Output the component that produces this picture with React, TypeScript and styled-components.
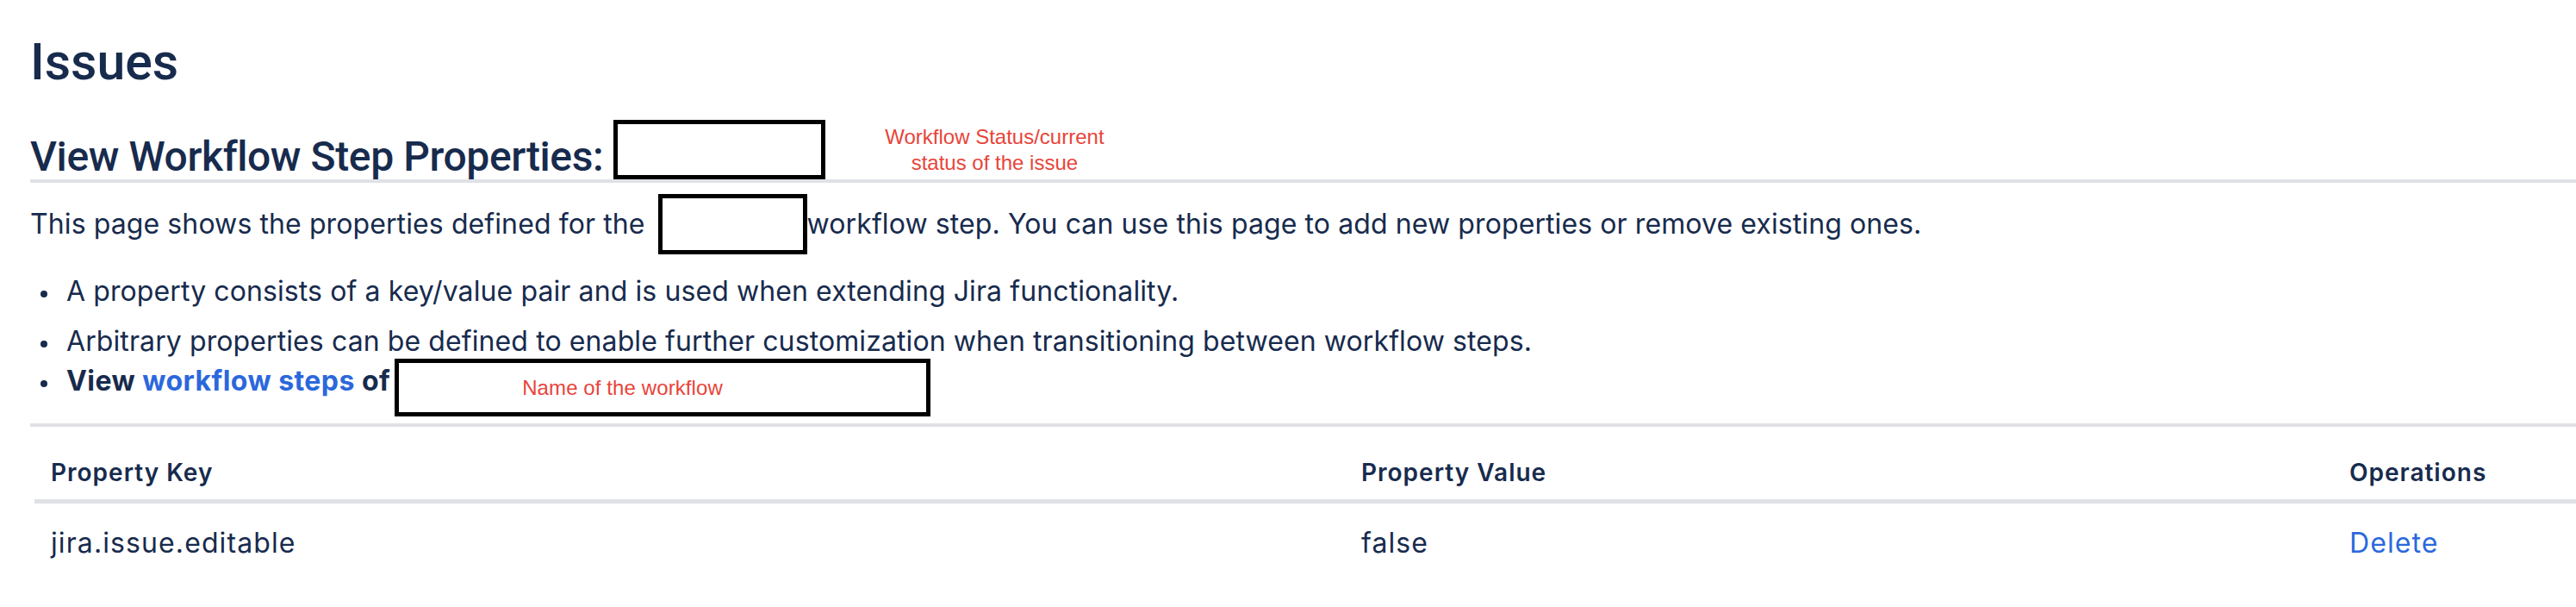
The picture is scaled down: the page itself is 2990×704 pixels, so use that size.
import React from 'react'
import styled, { createGlobalStyle } from 'styled-components'

const GlobalStyle = createGlobalStyle`
  html, body {
    margin: 0;
    padding: 0;
    background: #fff;
    overflow: hidden;
  }
  body {
    font-family: Inter, 'Noto Sans', 'Liberation Sans', sans-serif;
    color: #172b4d;
  }
`

const Page = styled.div`
  padding-left: 35px;
`

const Title = styled.h1`
  margin: 36px 0 0;
  font-family: Roboto, Inter, sans-serif;
  font-size: 59px;
  font-weight: 500;
  line-height: 72px;
`

const HeadingRow = styled.div`
  display: flex;
  align-items: flex-end;
  margin-top: 31px;
  border-bottom: 4px solid #dfe1e6;
`

const Heading = styled.h2`
  margin: 0;
  font-family: Roboto, Inter, sans-serif;
  font-size: 48px;
  font-weight: 500;
  letter-spacing: -0.4px;
  line-height: 52px;
`

const Redaction = styled.div<{ w: number; h: number; gap: number }>`
  box-sizing: border-box;
  flex: none;
  width: ${p => p.w}px;
  height: ${p => p.h}px;
  margin-left: ${p => p.gap}px;
  border: 5px solid #000;
  background: #fff;
  display: flex;
  align-items: center;
`

const Note = styled.div`
  font-family: 'Liberation Sans', Arial, sans-serif;
  font-size: 24px;
  color: #e8443a;
  white-space: nowrap;
`

const HeadingNote = styled(Note)`
  margin: 0 0 4px 69px;
  line-height: 30px;
  text-align: center;
`

const BoxNote = styled(Note)`
  padding-left: 143px;
  line-height: 26px;
`

const Intro = styled.div`
  display: flex;
  align-items: center;
  margin-top: 13px;
  font-size: 32px;
  letter-spacing: 0.1px;
  line-height: 38px;
  white-space: nowrap;
`

const List = styled.ul`
  list-style: none;
  margin: 24px 0 0;
  padding: 0;
  font-size: 32px;
  letter-spacing: 0.1px;
  line-height: 38px;
`

const Item = styled.li<{ spacing: number }>`
  display: flex;
  align-items: flex-start;
  margin-top: ${p => p.spacing}px;
  white-space: nowrap;
`

const Dot = styled.span<{ top: number }>`
  flex: none;
  width: 8px;
  height: 8px;
  margin: ${p => p.top}px 22px 0 12px;
  border-radius: 50%;
  background: #172b4d;
`

const Strong = styled.span<{ top?: number }>`
  font-weight: 700;
  letter-spacing: 0.45px;
  margin-top: ${p => p.top || 0}px;
`

const Link = styled.a`
  color: #2b68dc;
  text-decoration: none;
  cursor: pointer;
`

const TableWrap = styled.div`
  margin-top: 8px;
  border-top: 4px solid #dfe1e6;
`

const Table = styled.table`
  margin-left: 5px;
  width: calc(100% - 5px);
  border-collapse: collapse;
  table-layout: fixed;
`

const Th = styled.th`
  padding: 36px 19px 14px;
  text-align: left;
  font-size: 28px;
  font-weight: 600;
  letter-spacing: 1px;
  line-height: 34px;
  border-bottom: 5px solid #dfe1e6;
  white-space: nowrap;
`

const Td = styled.td`
  padding: 27px 19px;
  font-size: 32px;
  letter-spacing: 1.1px;
  line-height: 38px;
  white-space: nowrap;
`

const properties = [{ key: 'jira.issue.editable', value: 'false' }]

export default function App() {
  return (
    <>
      <GlobalStyle />
      <Page>
        <Title>Issues</Title>
        <HeadingRow>
          <Heading>View Workflow Step Properties:</Heading>
          <Redaction w={246} h={69} gap={12} />
          <HeadingNote>
            Workflow Status/current
            <br />
            status of the issue
          </HeadingNote>
        </HeadingRow>
        <Intro>
          <span>This page shows the properties defined for the</span>
          <Redaction w={173} h={70} gap={15} />
          <span>
            workflow step. You can use this page to add new properties or
            remove existing ones.
          </span>
        </Intro>
        <List>
          <Item spacing={0}>
            <Dot top={18} />
            <span>
              A property consists of a key/value pair and is used when
              extending Jira functionality.
            </span>
          </Item>
          <Item spacing={20}>
            <Dot top={18} />
            <span>
              Arbitrary properties can be defined to enable further
              customization when transitioning between workflow steps.
            </span>
          </Item>
          <Item spacing={1}>
            <Dot top={25} />
            <Strong top={7}>
              View <Link>workflow steps</Link> of
            </Strong>
            <Redaction w={622} h={67} gap={5}>
              <BoxNote>Name of the workflow</BoxNote>
            </Redaction>
          </Item>
        </List>
        <TableWrap>
          <Table>
            <colgroup>
              <col style={{ width: 1521 }} />
              <col style={{ width: 1147 }} />
              <col />
            </colgroup>
            <thead>
              <tr>
                <Th>Property Key</Th>
                <Th>Property Value</Th>
                <Th>Operations</Th>
              </tr>
            </thead>
            <tbody>
              {properties.map(p => (
                <tr key={p.key}>
                  <Td>{p.key}</Td>
                  <Td>{p.value}</Td>
                  <Td>
                    <Link>Delete</Link>
                  </Td>
                </tr>
              ))}
            </tbody>
          </Table>
        </TableWrap>
      </Page>
    </>
  )
}
